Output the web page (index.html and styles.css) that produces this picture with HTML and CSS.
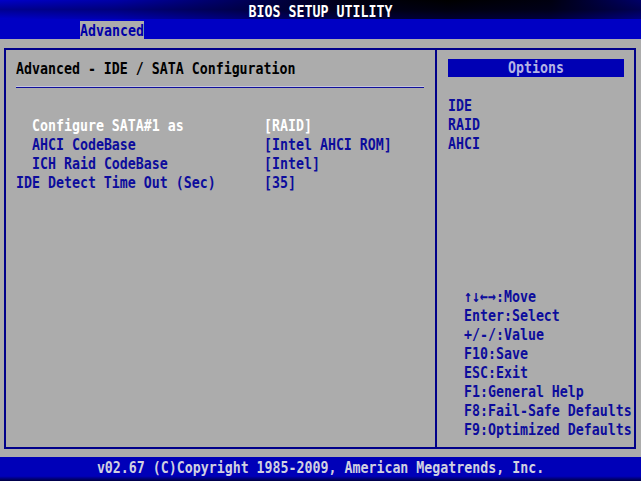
FILE: index.html
```html
<!DOCTYPE html>
<html>
<head>
    <title>BIOS Setup Utility</title>
    <link rel="stylesheet" href="styles.css">
</head>
<body>
    <div class="screen">
        <div class="titlebar">
            <div class="title-text">BIOS SETUP UTILITY</div>
        </div>

        <div class="menubar">
            <span class="tab"><span class="glyph">Advanced</span></span>
        </div>

        <div class="main">
            <div class="frame">
                <div class="panel-left">
                    <div class="heading">Advanced - IDE / SATA Configuration</div>
                    <div class="rule"></div>

                    <div class="items">
                        <div class="item selected">
                            <span class="label sub">Configure SATA#1 as</span>
                            <span class="value">[RAID]</span>
                        </div>
                        <div class="item">
                            <span class="label sub">AHCI CodeBase</span>
                            <span class="value">[Intel AHCI ROM]</span>
                        </div>
                        <div class="item">
                            <span class="label sub">ICH Raid CodeBase</span>
                            <span class="value">[Intel]</span>
                        </div>
                        <div class="item">
                            <span class="label">IDE Detect Time Out (Sec)</span>
                            <span class="value">[35]</span>
                        </div>
                    </div>
                </div>

                <div class="panel-right">
                    <div class="opt-head"><span class="glyph">Options</span></div>

                    <div class="opt-list">
                        <div class="txt">IDE</div>
                        <div class="txt">RAID</div>
                        <div class="txt">AHCI</div>
                    </div>

                    <div class="help">
                        <div class="txt">&uarr;&darr;&larr;&rarr;:Move</div>
                        <div class="txt">Enter:Select</div>
                        <div class="txt">+/-/:Value</div>
                        <div class="txt">F10:Save</div>
                        <div class="txt">ESC:Exit</div>
                        <div class="txt">F1:General Help</div>
                        <div class="txt">F8:Fail-Safe Defaults</div>
                        <div class="txt">F9:Optimized Defaults</div>
                    </div>
                </div>
            </div>
        </div>

        <div class="footer">
            <div class="footer-text">v02.67 (C)Copyright 1985-2009, American Megatrends, Inc.</div>
        </div>
    </div>
</body>
</html>
```

FILE: styles.css
```css
body {
    margin: 0;
    background: #000000;
    font-family: "DejaVu Sans Mono", "Liberation Mono", monospace;
    font-weight: bold;
    font-size: 13.28px;
    line-height: 19px;
    white-space: nowrap;
}

.screen {
    width: 641px;
    height: 481px;
    display: flex;
    flex-direction: column;
    overflow: hidden;
}

/* text cells are taller than wide, like the VGA font */
.title-text,
.footer-text,
.heading,
.item,
.txt,
.glyph {
    transform: scaleY(1.25);
}

.glyph {
    display: inline-block;
}

.titlebar {
    height: 19px;
    flex: none;
    box-sizing: border-box;
    padding-top: 2px;
    text-align: center;
    color: #ffffff;
    background:
        linear-gradient(rgba(0, 0, 40, 0) 0%, rgba(0, 0, 40, 0.35) 50%, rgba(0, 0, 200, 0.25) 100%),
        linear-gradient(to right, #0000c8 0%, #0000a8 18%, #000060 36%, #000010 55%, #000000 70%, #000010 86%, #000068 100%);
}

.menubar {
    height: 20px;
    flex: none;
    box-sizing: border-box;
    padding: 2px 0 0 80px;
    background: #0000c4;
}

.tab {
    display: inline-block;
    width: 64px;
    height: 18px;
    line-height: 19px;
    background: #acacac;
    color: #0000a8;
    vertical-align: top;
}

.main {
    height: 418px;
    flex: none;
    box-sizing: border-box;
    padding: 9px 5px 8px 4px;
    background: #acacac;
}

.frame {
    height: 100%;
    box-sizing: border-box;
    border: 2px solid #00008a;
    display: flex;
}

.panel-left {
    width: 431px;
    box-sizing: border-box;
    border-right: 2px solid #00008a;
    padding: 9px 0 0 10px;
}

.heading {
    color: #000000;
}

.rule {
    width: 408px;
    height: 1px;
    margin-top: 9px;
    background: #10109a;
    box-shadow: 0 -1px 0 #c4c4d8;
}

.items {
    margin-top: 28px;
}

.item {
    display: grid;
    grid-template-columns: 248px auto;
    color: #0c0c9c;
}

.item.selected {
    color: #ffffff;
}

.label.sub {
    padding-left: 16px;
}

.panel-right {
    flex: 1;
    display: flex;
    flex-direction: column;
    padding: 9px 0 8px 11px;
    color: #0c0c9c;
}

.opt-head {
    width: 176px;
    height: 18px;
    line-height: 18px;
    text-align: center;
    background: #0000b4;
    color: #b4b4e4;
}

.opt-list {
    margin-top: 19px;
}

.help {
    margin-top: auto;
    padding-left: 16px;
}

.footer {
    flex: 1;
    box-sizing: border-box;
    padding-top: 1px;
    text-align: center;
    color: #d0d0e0;
    background: linear-gradient(#0000b8 0%, #0000b8 80%, #000040 100%);
}
```
